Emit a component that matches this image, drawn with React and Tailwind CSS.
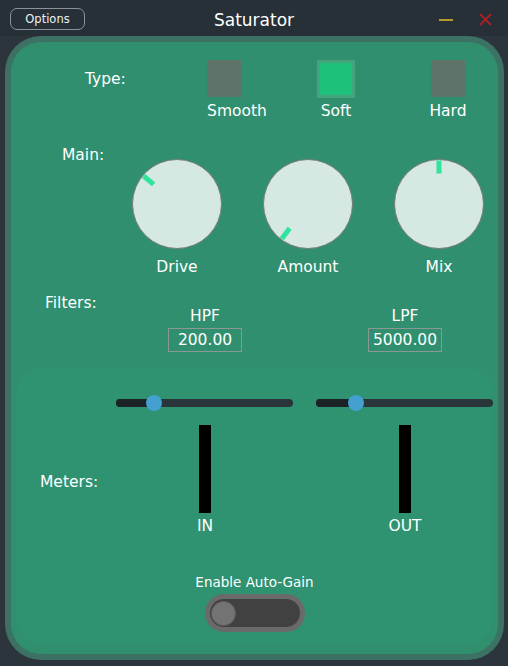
import { useState } from 'react'

function TypeButton({ label, active, width }) {
  return (
    <div className="flex flex-col items-center" style={{ width }}>
      <div className="h-[38px] flex items-start">
        {active ? (
          <div className="w-[38px] h-[38px] border-[3px] border-[#43a47d] bg-[#1ec07a]" />
        ) : (
          <div className="w-[34px] h-[37px] bg-[#5f7469]" />
        )}
      </div>
      <div className="mt-[3px] text-[15.5px] leading-[20px]">{label}</div>
    </div>
  )
}

function Knob({ label, angle }) {
  return (
    <div className="w-[90px] flex flex-col items-center">
      <svg width="90" height="90" viewBox="0 0 90 90">
        <circle cx="45" cy="45" r="44.5" fill="#d5e8e1" stroke="#7b7b7b" />
        <rect x="42.5" y="1.5" width="5" height="13" fill="#2fe49b" transform={`rotate(${angle} 45 45)`} />
      </svg>
      <div className="mt-[8px] text-[15.5px] leading-[20px]">{label}</div>
    </div>
  )
}

function Slider({ pos }) {
  return (
    <div className="relative shrink-0 w-[177px] h-[8px] rounded-full bg-[#2a3539]">
      <div className="h-full rounded-full bg-[#1b2326]" style={{ width: pos }} />
      <div
        className="absolute top-[-4px] w-[16px] h-[16px] rounded-full bg-[#43a0cf]"
        style={{ left: pos - 8 }}
      />
    </div>
  )
}

function FilterBox({ label, value }) {
  return (
    <div className="w-[74px] flex flex-col items-center">
      <div className="text-[15.5px] leading-[20px]">{label}</div>
      <div className="mt-[2px] w-[74px] h-[24px] border border-[#8c9893] text-center text-[15.5px] leading-[22px]">
        {value}
      </div>
    </div>
  )
}

function Meter({ label }) {
  return (
    <div className="w-[40px] flex flex-col items-center">
      <div className="w-[12px] h-[88px] bg-black" />
      <div className="mt-[3px] text-[15.5px] leading-[20px]">{label}</div>
    </div>
  )
}

export default function App() {
  const [autoGain, setAutoGain] = useState(false)

  return (
    <div className="w-[508px] h-[666px] bg-[#2c353b] flex flex-col font-['DejaVu_Sans',sans-serif] text-white">
      {/* Title bar */}
      <div className="h-[36px] shrink-0 bg-[#263036] grid grid-cols-[1fr_auto_1fr] items-center">
        <div className="pl-[10px]">
          <button className="w-[75px] h-[22px] rounded-[7px] border border-[#8b9297] text-[11.5px] leading-none text-[#eef1f2]">
            Options
          </button>
        </div>
        <div className="pt-[3px] text-[17px] leading-[24px]">Saturator</div>
        <div className="flex justify-end items-center pr-[16px] gap-[26px] pt-[3px]">
          <svg width="14" height="14" viewBox="0 0 14 14">
            <rect x="0" y="6" width="14" height="2" fill="#b8982a" />
          </svg>
          <svg width="13" height="13" viewBox="0 0 13 13">
            <path d="M1 1 L12 12 M12 1 L1 12" stroke="#a8202a" strokeWidth="1.8" />
          </svg>
        </div>
      </div>

      {/* Panel */}
      <div className="flex-1 pl-[5px] pr-[4px] pb-[6px]">
        <div className="h-full rounded-[36px] bg-[#3c7163] p-[6px]">
          <div className="h-full rounded-[30px] bg-[#308f6f] flex flex-col">
            {/* Type */}
            <div className="mt-[18px] flex items-start">
              <div className="w-[195px] pl-[74px] mt-[9px] text-[15.5px] leading-[20px]">Type:</div>
              <div className="w-[100px]">
                <div className="w-[62px] flex flex-col items-start">
                  <div className="h-[38px] ml-[1px]">
                    <div className="w-[34px] h-[37px] bg-[#5f7469]" />
                  </div>
                  <div className="mt-[3px] w-[62px] text-center text-[15.5px] leading-[20px]">Smooth</div>
                </div>
              </div>
              <div className="w-[112px]">
                <TypeButton label="Soft" active width={60} />
              </div>
              <TypeButton label="Hard" width={60} />
            </div>

            {/* Main */}
            <div className="flex items-start">
              <div className="w-[121px] pl-[51px] mt-[24px] text-[15.5px] leading-[20px]">Main:</div>
              <div className="mt-[38px] flex gap-[41px]">
                <Knob label="Drive" angle={-50} />
                <Knob label="Amount" angle={-143} />
                <Knob label="Mix" angle={0} />
              </div>
            </div>

            {/* Filters */}
            <div className="flex items-start">
              <div className="w-[157px] pl-[34px] mt-[16px] text-[15.5px] leading-[20px]">Filters:</div>
              <div className="mt-[29px] flex gap-[126px]">
                <FilterBox label="HPF" value="200.00" />
                <FilterBox label="LPF" value="5000.00" />
              </div>
            </div>

            {/* Meters section */}
            <div className="mt-[16px] mx-[6px] mb-[10px] flex-1 rounded-[24px] bg-[#2f9270] flex flex-col">
              <div className="mt-[27px] h-[16px] flex items-center pl-[99px] gap-[23px]">
                <Slider pos={38} />
                <Slider pos={40} />
              </div>

              <div className="mt-[14px] flex items-start">
                <div className="w-[168px] pl-[23px] mt-[47px] text-[15.5px] leading-[20px]">Meters:</div>
                <div className="flex gap-[160px]">
                  <Meter label="IN" />
                  <Meter label="OUT" />
                </div>
              </div>

              <div className="mt-[36px] text-center text-[13.5px] leading-[20px]">Enable Auto-Gain</div>
              <button
                onClick={() => setAutoGain(!autoGain)}
                className="mt-[2px] self-center w-[100px] h-[38px] rounded-full bg-[#6a6a6a] p-[5px]"
              >
                <div className="w-full h-full rounded-full bg-[#414141] flex items-center px-[1px]">
                  <div className="w-[25px] h-[25px] rounded-full bg-[#737373] border border-[#5e5e5e]" />
                </div>
              </button>
            </div>
          </div>
        </div>
      </div>
    </div>
  )
}
